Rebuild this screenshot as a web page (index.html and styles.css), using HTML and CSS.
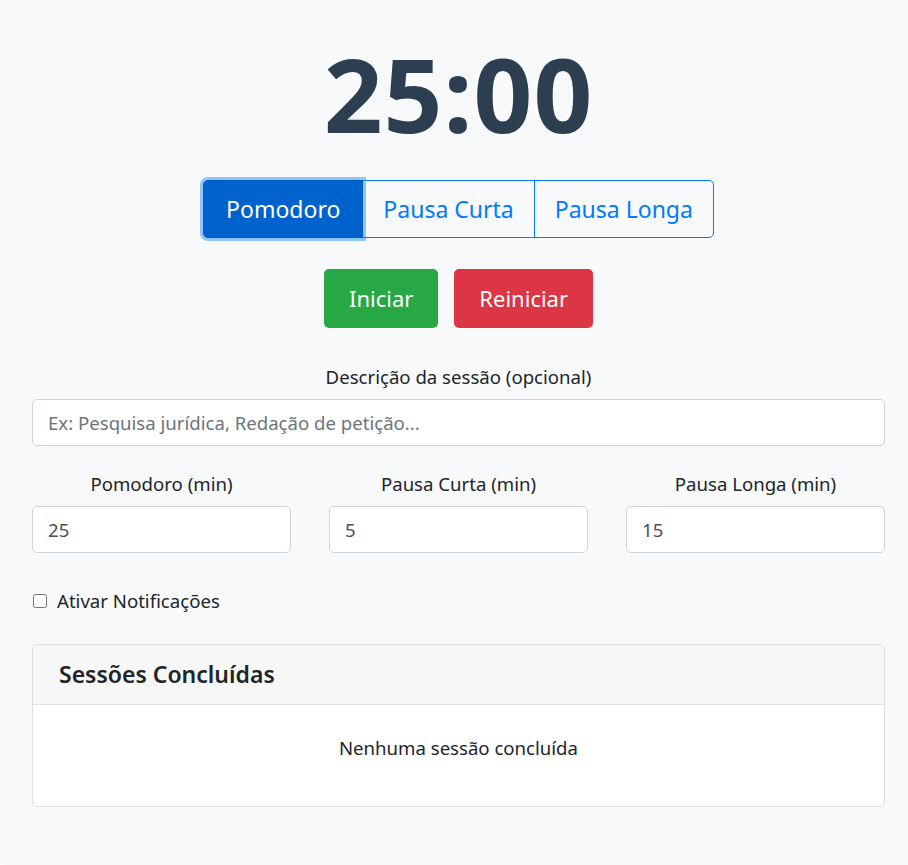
FILE: index.html
```html
<!DOCTYPE html>
<html lang="pt-BR">
<head>
    <meta charset="UTF-8">
    <meta name="viewport" content="width=device-width, initial-scale=1.0">
    <title>Pomodoro</title>
    <link rel="stylesheet" href="styles.css">
</head>
<body>
    <div class="timer-box">
        <div class="timer">25:00</div>

        <!-- mode switch: active one gets the focus ring -->
        <div class="mode-group">
            <button class="mode-btn active">Pomodoro</button>
            <button class="mode-btn">Pausa Curta</button>
            <button class="mode-btn">Pausa Longa</button>
        </div>

        <div class="actions">
            <button class="action-btn start">Iniciar</button>
            <button class="action-btn reset">Reiniciar</button>
        </div>

        <div class="field">
            <label for="desc">Descrição da sessão (opcional)</label>
            <input type="text" id="desc" class="input" placeholder="Ex: Pesquisa jurídica, Redação de petição...">
        </div>

        <div class="settings">
            <div class="field">
                <label for="pomo-min">Pomodoro (min)</label>
                <input type="number" id="pomo-min" class="input" value="25">
            </div>
            <div class="field">
                <label for="short-min">Pausa Curta (min)</label>
                <input type="number" id="short-min" class="input" value="5">
            </div>
            <div class="field">
                <label for="long-min">Pausa Longa (min)</label>
                <input type="number" id="long-min" class="input" value="15">
            </div>
        </div>

        <label class="notify">
            <input type="checkbox" class="notify-check">
            <span>Ativar Notificações</span>
        </label>

        <div class="sessions">
            <div class="sessions-header">Sessões Concluídas</div>
            <div class="sessions-body">Nenhuma sessão concluída</div>
        </div>
    </div>
</body>
</html>
```

FILE: styles.css
```css
*, *::before, *::after {
    box-sizing: border-box;
}

html, body {
    height: 100%;
}

body {
    margin: 0;
    background-color: #fff;
    color: #212529;
    font: 18.6px/27px 'Noto Sans', 'Segoe UI', sans-serif;
    overflow: hidden;
}

/* the panel runs past the right edge of the window */
.timer-box {
    width: 913px;
    min-height: 100%;
    margin-left: 2px;
    padding: 33px 30px 40px;
    background-color: #f8f9fa;
    border-radius: 6px;
    box-shadow: 0 0 4px rgba(0, 0, 0, 0.08);
}

.timer {
    margin-bottom: 27px;
    color: #2c3e50;
    font-size: 103px;
    font-weight: bold;
    line-height: 120px;
    letter-spacing: 1px;
    text-align: center;
}

.mode-group {
    display: flex;
    justify-content: center;
}

.mode-btn {
    padding: 10px 20px;
    border: 1px solid #007bff;
    background-color: transparent;
    color: #007bff;
    font: inherit;
    font-size: 23px;
    line-height: 36px;
    cursor: pointer;
}

.mode-btn + .mode-btn {
    margin-left: -1px;
}

.mode-btn:first-child {
    padding-left: 22px;
    padding-right: 22px;
    border-radius: 5px 0 0 5px;
}

.mode-btn:last-child {
    border-radius: 0 5px 5px 0;
}

.mode-btn.active {
    position: relative;
    z-index: 1;
    background-color: #0062cc;
    border-color: #005cbf;
    color: #fff;
    box-shadow: 0 0 0 3px rgba(38, 143, 255, 0.5);
}

.actions {
    display: flex;
    justify-content: center;
    gap: 16px;
    margin-top: 31px;
}

.action-btn {
    padding: 10px 24px;
    border: 1px solid transparent;
    border-radius: 5px;
    color: #fff;
    font: inherit;
    font-size: 22px;
    line-height: 37px;
    cursor: pointer;
}

.start {
    background-color: #28a745;
}

.reset {
    background-color: #dc3545;
}

.field {
    display: flex;
    flex-direction: column;
    min-width: 0;
    text-align: center;
}

.actions + .field {
    margin-top: 35px;
}

.field label {
    margin-bottom: 9px;
}

.input {
    width: 100%;
    min-width: 0;
    height: 47px;
    padding: 0 15px;
    border: 1px solid #ced4da;
    border-radius: 5px;
    background-color: #fff;
    color: #495057;
    font: inherit;
}

.input::placeholder {
    color: #6c757d;
}

/* hide number spinners like the screenshot */
.input::-webkit-inner-spin-button,
.input::-webkit-outer-spin-button {
    -webkit-appearance: none;
    margin: 0;
}

.settings {
    display: grid;
    grid-template-columns: repeat(3, minmax(0, 1fr));
    gap: 38px;
    margin-top: 24px;
}

.notify {
    display: flex;
    align-items: center;
    gap: 10px;
    margin-top: 34px;
    margin-left: 1px;
}

.notify-check {
    width: 14px;
    height: 14px;
    margin: 0;
}

.sessions {
    margin-top: 30px;
    border: 1px solid #dfdfdf;
    border-radius: 5px;
    background-color: #fff;
    overflow: hidden;
}

.sessions-header {
    padding: 15px 26px;
    border-bottom: 1px solid #dfdfdf;
    background-color: #f7f7f7;
    font-size: 23px;
    font-weight: 600;
    line-height: 29px;
}

.sessions-body {
    padding: 29px 24px 45px;
    text-align: center;
}
```
